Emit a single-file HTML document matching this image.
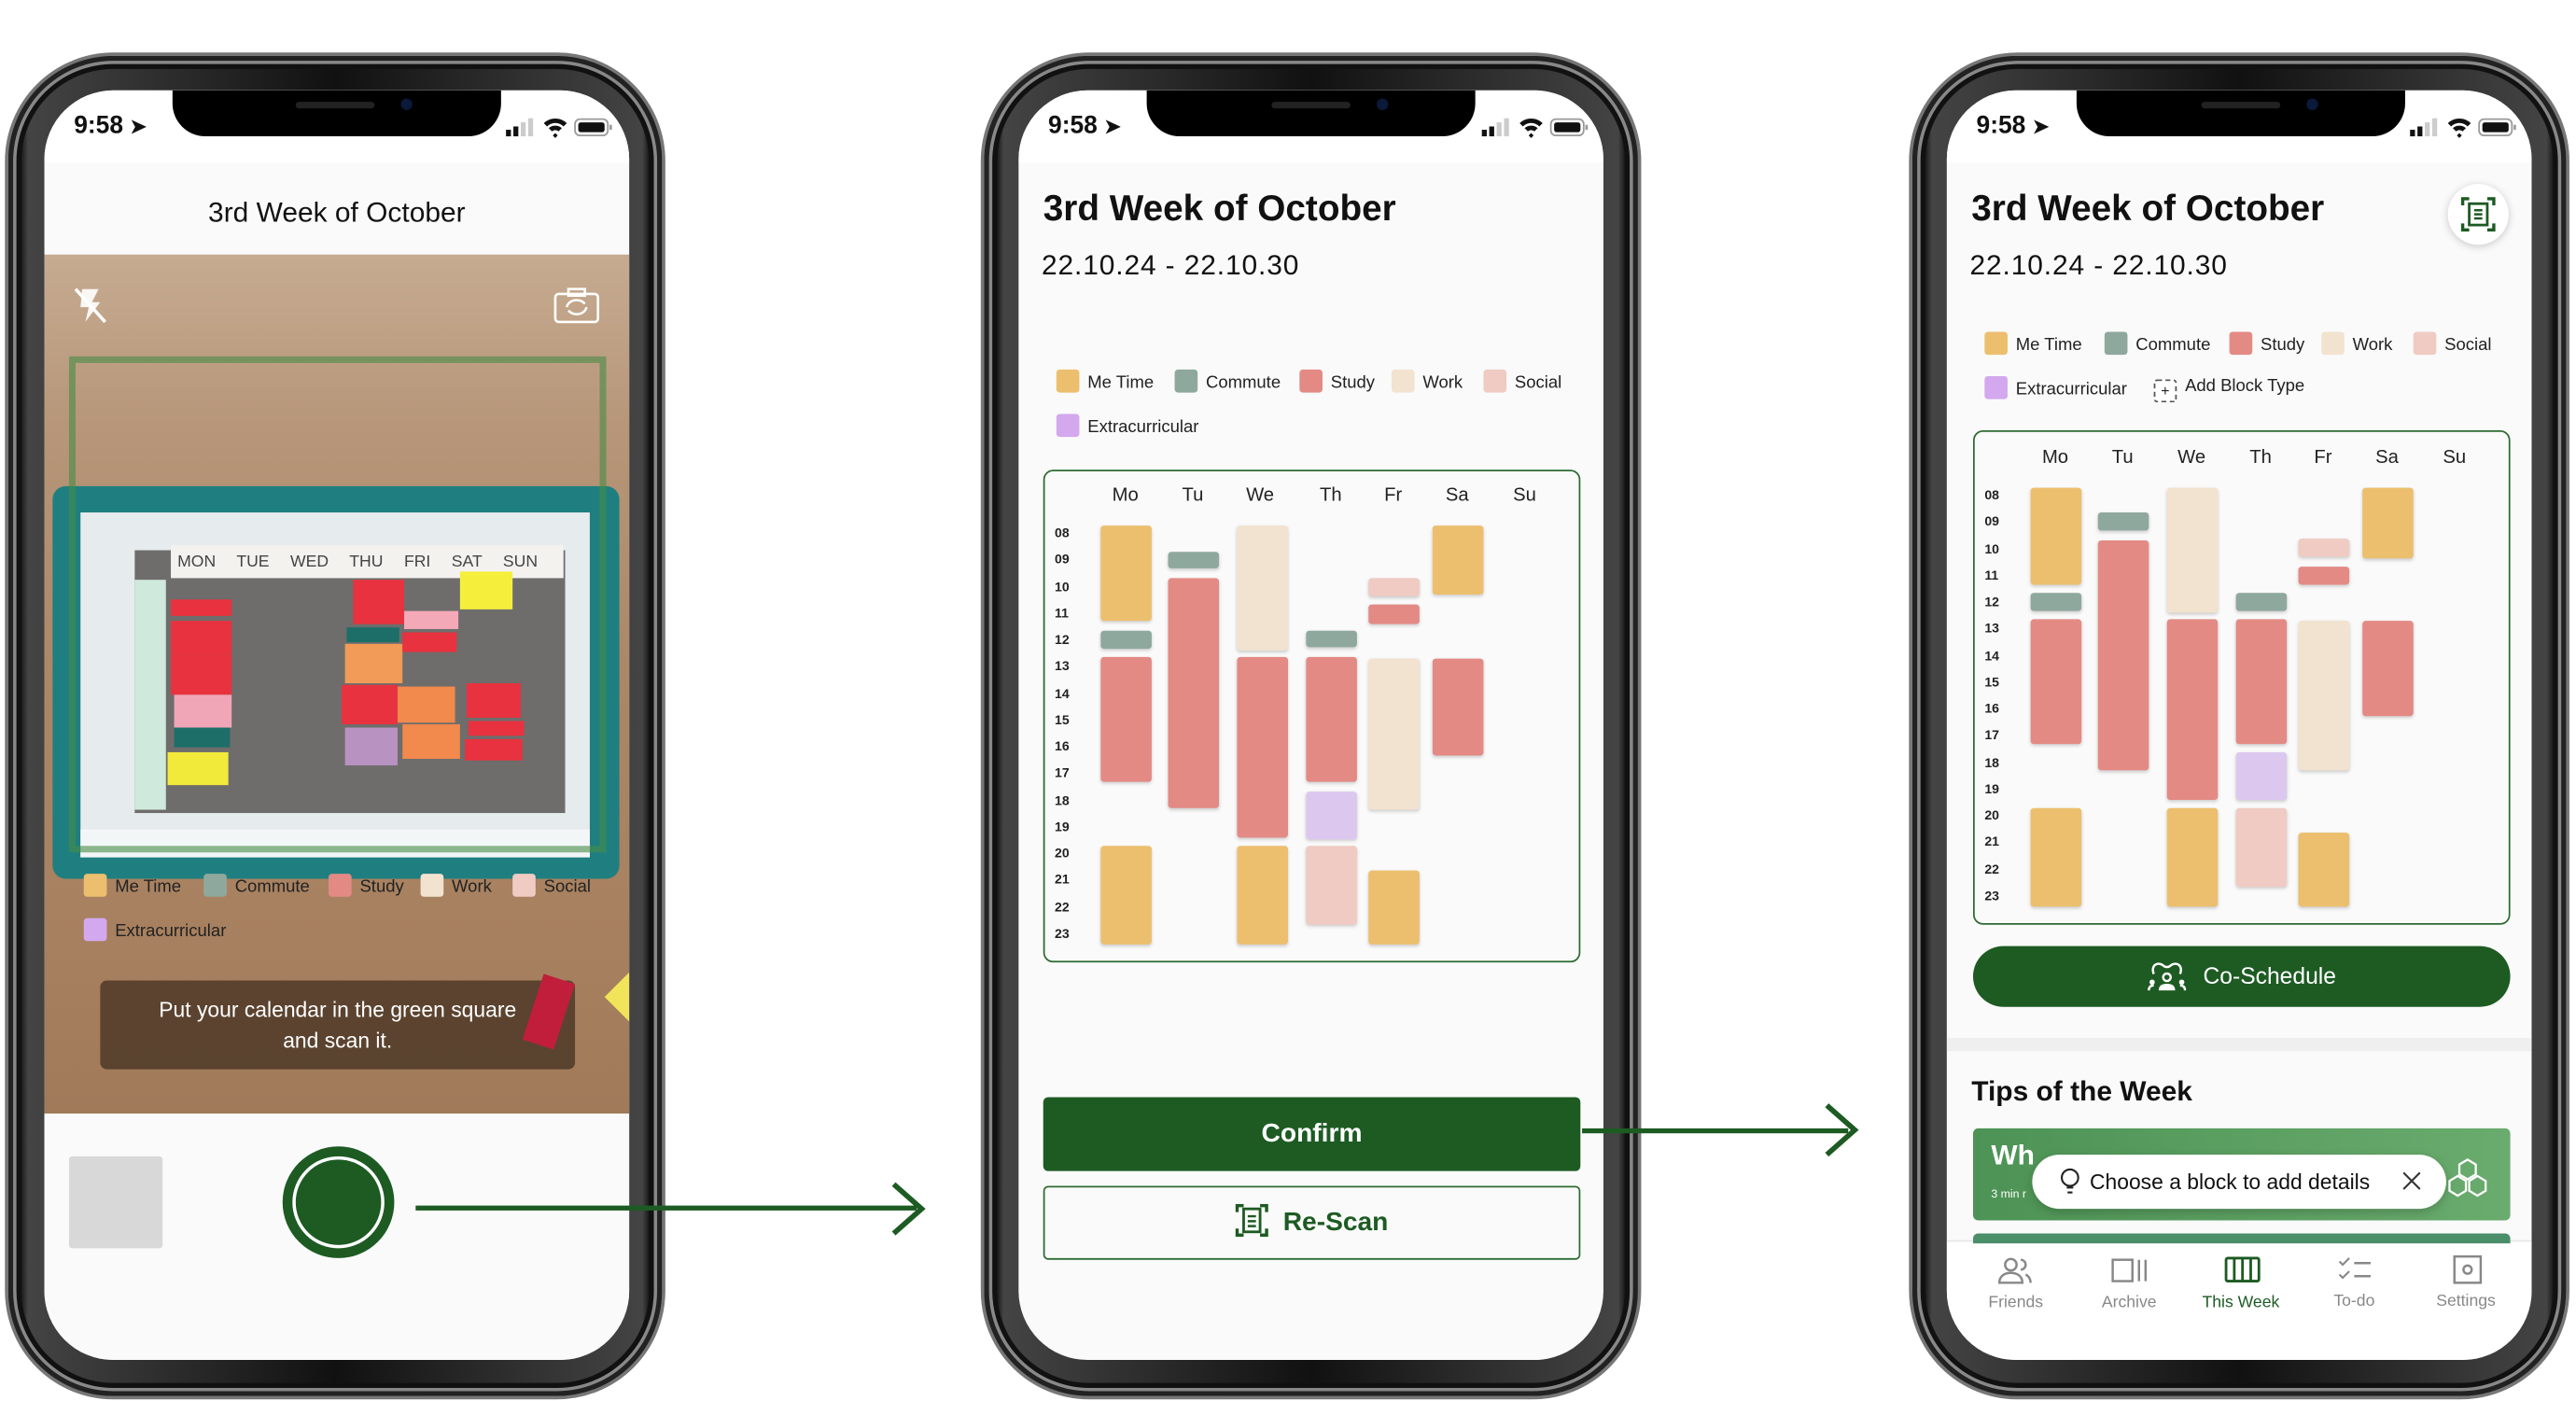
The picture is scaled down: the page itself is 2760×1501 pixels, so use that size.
<!DOCTYPE html>
<html><head><meta charset="utf-8">
<style>
*{margin:0;padding:0;box-sizing:border-box}
html,body{width:2760px;height:1501px;overflow:hidden;background:#fff;font-family:"Liberation Sans",sans-serif}
#root{position:absolute;left:0;top:0;width:1568px;height:853px;transform:scale(1.7602,1.7597);transform-origin:0 0}
.a{position:absolute}
.phone{position:absolute;width:402px;height:820px;border-radius:66px;background:linear-gradient(90deg,#2a2a2a,#9a9a9a 1%,#1a1a1a 2%,#444 3%,#111 50%,#444 97%,#1a1a1a 98%,#9a9a9a 99%,#2a2a2a);border:2px solid #777;box-shadow:inset 0 0 0 3px #222,inset 0 0 0 5px #888,inset 0 0 0 8px #111}
.screen{position:absolute;width:356px;height:773px;border-radius:42px;background:#fafafa;overflow:hidden}
.notch{position:absolute;top:0;width:200px;height:28px;background:#000;border-radius:0 0 20px 20px}
.sb{position:absolute;top:0;left:0;width:356px;height:44px;background:#fff}
.time{position:absolute;top:13px;left:18px;font-size:15px;font-weight:bold;color:#111}
.b{position:absolute;border-radius:2px;box-shadow:0 1px 2px rgba(0,0,0,.18)}
.mt{background:#ecbf6e}.cm{background:#8fa89e}.st{background:#e38a85}.wk{background:#f2e3d0}.so{background:#efcbc3}.ex{background:#dcc8ef}
.lg{position:absolute;font-size:10.5px;color:#222;white-space:nowrap}
.lg i{display:inline-block;width:14px;height:14px;border-radius:2px;vertical-align:-3px;margin-right:5px}
.hrs{position:absolute;font-size:8px;line-height:16.27px;color:#222;font-weight:bold}
.days{position:absolute;font-size:11.5px;color:#222}
.days span{position:absolute;transform:translateX(-50%)}
</style></head><body><div id="root">

<!-- PHONE 1 -->
<div class="phone" style="left:3px;top:32px"></div>
<div class="screen" style="left:27px;top:55px">
  <div class="sb"></div>
  <div class="time">9:58 <span style="font-size:12px">➤</span></div>
  <div class="notch" style="left:78px"></div>
  <div class="a" style="left:76px;width:204px;text-align:center;font-size:17px;color:#111;top:65px">3rd Week of October</div>
  <div class="a" style="left:0;top:100px;width:356px;height:523px;background:linear-gradient(180deg,#c6ab91 0%,#b79679 20%,#ab8767 50%,#a7805f 80%,#a07a59 100%)"></div>
  <div class="a" style="left:5px;top:241px;width:345px;height:239px;background:#1f7f80;border-radius:8px"></div>
  <div class="a" style="left:22px;top:257px;width:310px;height:210px;background:#e6ebee"></div>
  <div class="a" style="left:55px;top:280px;width:262px;height:160px;background:#6e6d6c"></div>
  <div class="a" style="left:55px;top:298px;width:19px;height:140px;background:#cfe9dc"></div>
  <div class="a" style="left:77px;top:277px;width:239px;height:20px;background:#f4f2ef;font-size:10px;color:#444;word-spacing:10px;padding:5px 0 0 4px;white-space:nowrap">MON TUE WED THU FRI SAT SUN</div>
  <div class="a" style="left:77px;top:310px;width:37px;height:10px;background:#e8323f"></div>
  <div class="a" style="left:77px;top:323px;width:37px;height:21px;background:#e8323f"></div>
  <div class="a" style="left:77px;top:344px;width:37px;height:24px;background:#e8323f"></div>
  <div class="a" style="left:79px;top:368px;width:35px;height:20px;background:#f1a6b8"></div>
  <div class="a" style="left:79px;top:388px;width:34px;height:12px;background:#1d6e68"></div>
  <div class="a" style="left:75px;top:403px;width:37px;height:20px;background:#f2ea3a"></div>
  <div class="a" style="left:188px;top:298px;width:31px;height:27px;background:#e8323f"></div>
  <div class="a" style="left:184px;top:327px;width:32px;height:9px;background:#1d6e68"></div>
  <div class="a" style="left:183px;top:337px;width:35px;height:24px;background:#f29a58"></div>
  <div class="a" style="left:181px;top:362px;width:34px;height:24px;background:#e8323f"></div>
  <div class="a" style="left:183px;top:388px;width:32px;height:23px;background:#b892c0"></div>
  <div class="a" style="left:219px;top:317px;width:33px;height:11px;background:#f3a9b8"></div>
  <div class="a" style="left:218px;top:330px;width:33px;height:12px;background:#e8323f"></div>
  <div class="a" style="left:215px;top:363px;width:35px;height:22px;background:#f2894d"></div>
  <div class="a" style="left:218px;top:386px;width:35px;height:21px;background:#f2894d"></div>
  <div class="a" style="left:253px;top:293px;width:32px;height:23px;background:#f5ef3c"></div>
  <div class="a" style="left:257px;top:361px;width:33px;height:21px;background:#e8323f"></div>
  <div class="a" style="left:258px;top:384px;width:34px;height:9px;background:#e8323f"></div>
  <div class="a" style="left:256px;top:395px;width:35px;height:13px;background:#e8323f"></div>
  <div class="a" style="left:22px;top:450px;width:310px;height:17px;background:#f3f6f7"></div>
  <div class="a" style="left:15px;top:162px;width:327px;height:302px;border:4px solid rgba(70,140,70,.6)"></div>
  <svg class="a" style="left:16px;top:118px" width="24" height="26"><path d="M7 3h10l-4 8h5L9 23l2-9H6z" fill="#fff" opacity=".9"/><path d="M3 3l18 20" stroke="#fff" stroke-width="2"/></svg>
  <svg class="a" style="left:309px;top:119px" width="30" height="24"><rect x="2" y="5" width="26" height="17" rx="2" fill="none" stroke="#fff" stroke-width="1.5"/><rect x="10" y="2" width="10" height="4" fill="none" stroke="#fff" stroke-width="1.5"/><path d="M9 13a6 5 0 0 1 11-2M21 13a6 5 0 0 1-11 2" fill="none" stroke="#fff" stroke-width="1.4"/></svg>
  <div class="lg" style="left:24px;top:477px"><i class="mt"></i>Me Time</div>
  <div class="lg" style="left:97px;top:477px"><i class="cm"></i>Commute</div>
  <div class="lg" style="left:173px;top:477px"><i class="st"></i>Study</div>
  <div class="lg" style="left:229px;top:477px"><i class="wk"></i>Work</div>
  <div class="lg" style="left:285px;top:477px"><i class="so"></i>Social</div>
  <div class="lg" style="left:24px;top:504px"><i style="background:#d3a8ee"></i>Extracurricular</div>
  <div class="a" style="left:34px;top:542px;width:289px;height:54px;background:rgba(72,52,36,.8);border-radius:4px;color:#fff;font-size:13px;line-height:19px;text-align:center;padding-top:8px">Put your calendar in the green square<br>and scan it.</div>
  <div class="a" style="left:297px;top:540px;width:20px;height:42px;background:#c01e3a;transform:rotate(18deg)"></div>
  <svg class="a" style="left:340px;top:537px" width="16" height="32"><path d="M16 0L1 15L16 30z" fill="#f1e35a"/></svg>
  <div class="a" style="left:0;top:623px;width:356px;height:150px;background:#fafafa"></div>
  <div class="a" style="left:15px;top:649px;width:57px;height:56px;background:#d8d8d8;border-radius:2px"></div>
  <div class="a" style="left:145px;top:643px;width:68px;height:68px;border-radius:50%;background:#1d5b23"></div>
  <div class="a" style="left:151px;top:649px;width:56px;height:56px;border-radius:50%;border:2.5px solid #fff"></div>
</div>

<!-- PHONE 2 -->
<div class="phone" style="left:597px;top:32px"></div>
<div class="screen" style="left:620px;top:55px">
  <div class="sb"></div>
  <div class="time">9:58 <span style="font-size:12px">➤</span></div>
  <div class="notch" style="left:78px"></div>
</div>
<div class="a" style="left:635px;top:114px;font-size:22px;font-weight:bold;color:#111">3rd Week of October</div>
<div class="a" style="left:634px;top:152px;font-size:17px;color:#111;letter-spacing:.5px">22.10.24 - 22.10.30</div>
<div class="lg" style="left:643px;top:225px"><i class="mt"></i>Me Time</div>
<div class="lg" style="left:715px;top:225px"><i class="cm"></i>Commute</div>
<div class="lg" style="left:791px;top:225px"><i class="st"></i>Study</div>
<div class="lg" style="left:847px;top:225px"><i class="wk"></i>Work</div>
<div class="lg" style="left:903px;top:225px"><i class="so"></i>Social</div>
<div class="lg" style="left:643px;top:252px"><i style="background:#d3a8ee"></i>Extracurricular</div>
<div class="a" style="left:635px;top:286px;width:327px;height:300px;border:1.3px solid #2e6b33;border-radius:6px"></div>
<div class="days" style="left:0;top:296px"><span style="left:685px">Mo</span><span style="left:726px">Tu</span><span style="left:767px">We</span><span style="left:810px">Th</span><span style="left:848px">Fr</span><span style="left:887px">Sa</span><span style="left:928px">Su</span></div>
<div class="hrs" style="left:642px;top:317px">08<br>09<br>10<br>11<br>12<br>13<br>14<br>15<br>16<br>17<br>18<br>19<br>20<br>21<br>22<br>23</div>
<div class="b mt" style="left:670px;top:320px;width:31px;height:58px"></div>
<div class="b cm" style="left:670px;top:384px;width:31px;height:11px"></div>
<div class="b st" style="left:670px;top:400px;width:31px;height:76px"></div>
<div class="b mt" style="left:670px;top:515px;width:31px;height:60px"></div>
<div class="b cm" style="left:711px;top:336px;width:31px;height:10px"></div>
<div class="b st" style="left:711px;top:352px;width:31px;height:140px"></div>
<div class="b wk" style="left:753px;top:320px;width:31px;height:76px"></div>
<div class="b st" style="left:753px;top:400px;width:31px;height:110px"></div>
<div class="b mt" style="left:753px;top:515px;width:31px;height:60px"></div>
<div class="b cm" style="left:795px;top:384px;width:31px;height:10px"></div>
<div class="b st" style="left:795px;top:400px;width:31px;height:76px"></div>
<div class="b ex" style="left:795px;top:482px;width:31px;height:29px"></div>
<div class="b so" style="left:795px;top:515px;width:31px;height:48px"></div>
<div class="b so" style="left:833px;top:352px;width:31px;height:11px"></div>
<div class="b st" style="left:833px;top:368px;width:31px;height:12px"></div>
<div class="b wk" style="left:833px;top:401px;width:31px;height:92px"></div>
<div class="b mt" style="left:833px;top:530px;width:31px;height:45px"></div>
<div class="b mt" style="left:872px;top:320px;width:31px;height:42px"></div>
<div class="b st" style="left:872px;top:401px;width:31px;height:59px"></div>
<div class="a" style="left:635px;top:668px;width:327px;height:45px;background:#1d5b23;border-radius:3px;color:#fff;font-weight:bold;font-size:16px;text-align:center;line-height:45px">Confirm</div>
<div class="a" style="left:635px;top:722px;width:327px;height:45px;border:1.3px solid #2e6b33;border-radius:3px;color:#1d5b23;font-weight:bold;font-size:16px;text-align:center;line-height:43px"><svg width="20" height="20" style="vertical-align:-4px;margin-right:9px"><path d="M1 5V1h4M15 1h4v4M19 15v4h-4M5 19H1v-4" fill="none" stroke="#1d5b23" stroke-width="2"/><rect x="5" y="3" width="10" height="14" fill="none" stroke="#1d5b23" stroke-width="1.6"/><path d="M7.5 7.5h5M7.5 10.5h5M7.5 13.5h5" stroke="#1d5b23" stroke-width="1.4"/></svg>Re-Scan</div>

<!-- PHONE 3 -->
<div class="phone" style="left:1162px;top:32px"></div>
<div class="screen" style="left:1185px;top:55px">
  <div class="sb"></div>
  <div class="time">9:58 <span style="font-size:12px">➤</span></div>
  <div class="notch" style="left:79px"></div>
  <div class="a" style="left:0;top:577px;width:356px;height:8px;background:#efefef"></div>
  <div class="a" style="left:0;top:700px;width:356px;height:73px;background:#fff;border-top:1px solid #e6e6e6"></div>
</div>
<div class="a" style="left:1200px;top:114px;font-size:22px;font-weight:bold;color:#111">3rd Week of October</div>
<div class="a" style="left:1199px;top:152px;font-size:17px;color:#111;letter-spacing:.5px">22.10.24 - 22.10.30</div>
<div class="a" style="left:1490px;top:112px;width:37px;height:37px;border-radius:50%;background:#fff;box-shadow:0 1px 5px rgba(0,0,0,.2)"></div>
<svg class="a" style="left:1498px;top:120px" width="21" height="21"><path d="M1 5V1h4M16 1h4v4M20 16v4h-4M5 20H1v-4" fill="none" stroke="#1d5b23" stroke-width="2"/><rect x="5" y="4" width="11" height="13" fill="none" stroke="#1d5b23" stroke-width="1.6"/><path d="M8 8h5M8 10.5h5M8 13h5" stroke="#1d5b23" stroke-width="1.4"/></svg>
<div class="lg" style="left:1208px;top:202px"><i class="mt"></i>Me Time</div>
<div class="lg" style="left:1281px;top:202px"><i class="cm"></i>Commute</div>
<div class="lg" style="left:1357px;top:202px"><i class="st"></i>Study</div>
<div class="lg" style="left:1413px;top:202px"><i class="wk"></i>Work</div>
<div class="lg" style="left:1469px;top:202px"><i class="so"></i>Social</div>
<div class="lg" style="left:1208px;top:229px"><i style="background:#d3a8ee"></i>Extracurricular</div>
<div class="lg" style="left:1311px;top:229px"><i style="border:1px dashed #555;background:#fff;text-align:center;font-style:normal;font-size:9px;line-height:12px">+</i>Add Block Type</div>
<div class="a" style="left:1201px;top:262px;width:327px;height:301px;border:1.3px solid #2e6b33;border-radius:6px"></div>
<div class="days" style="left:0;top:273px"><span style="left:1251px">Mo</span><span style="left:1292px">Tu</span><span style="left:1334px">We</span><span style="left:1376px">Th</span><span style="left:1414px">Fr</span><span style="left:1453px">Sa</span><span style="left:1494px">Su</span></div>
<div class="hrs" style="left:1208px;top:294px">08<br>09<br>10<br>11<br>12<br>13<br>14<br>15<br>16<br>17<br>18<br>19<br>20<br>21<br>22<br>23</div>
<div class="b mt" style="left:1236px;top:297px;width:31px;height:59px"></div>
<div class="b cm" style="left:1236px;top:361px;width:31px;height:11px"></div>
<div class="b st" style="left:1236px;top:377px;width:31px;height:76px"></div>
<div class="b mt" style="left:1236px;top:492px;width:31px;height:60px"></div>
<div class="b cm" style="left:1277px;top:312px;width:31px;height:11px"></div>
<div class="b st" style="left:1277px;top:329px;width:31px;height:140px"></div>
<div class="b wk" style="left:1319px;top:297px;width:31px;height:76px"></div>
<div class="b st" style="left:1319px;top:377px;width:31px;height:110px"></div>
<div class="b mt" style="left:1319px;top:492px;width:31px;height:60px"></div>
<div class="b cm" style="left:1361px;top:361px;width:31px;height:11px"></div>
<div class="b st" style="left:1361px;top:377px;width:31px;height:76px"></div>
<div class="b ex" style="left:1361px;top:458px;width:31px;height:29px"></div>
<div class="b so" style="left:1361px;top:492px;width:31px;height:48px"></div>
<div class="b so" style="left:1399px;top:328px;width:31px;height:11px"></div>
<div class="b st" style="left:1399px;top:345px;width:31px;height:11px"></div>
<div class="b wk" style="left:1399px;top:378px;width:31px;height:91px"></div>
<div class="b mt" style="left:1399px;top:507px;width:31px;height:45px"></div>
<div class="b mt" style="left:1438px;top:297px;width:31px;height:43px"></div>
<div class="b st" style="left:1438px;top:378px;width:31px;height:58px"></div>
<div class="a" style="left:1201px;top:576px;width:327px;height:37px;background:#1d5b23;border-radius:19px;color:#fff;font-size:14px;text-align:center;line-height:37px"><svg width="24" height="20" style="vertical-align:-5px;margin-right:10px"><path d="M4 9C2 4 6 1 10 4c1 1 3 1 4 0 4-3 8 0 6 5" fill="none" stroke="#fff" stroke-width="1.4"/><circle cx="12" cy="11" r="2.3" fill="none" stroke="#fff" stroke-width="1.4"/><path d="M7 19c0-3 2-4 5-4s5 1 5 4z" fill="#fff"/><circle cx="3" cy="14" r="1.6" fill="#fff"/><circle cx="21" cy="14" r="1.6" fill="#fff"/><path d="M1 19c0-2 1-3 3-3M23 19c0-2-1-3-3-3" stroke="#fff" stroke-width="1.4" fill="none"/></svg>Co-Schedule</div>
<div class="a" style="left:1200px;top:655px;font-size:17px;font-weight:bold;color:#111">Tips of the Week</div>
<div class="a" style="left:1201px;top:687px;width:327px;height:56px;background:linear-gradient(90deg,#4d9355,#6aab6e);border-radius:3px"></div>
<div class="a" style="left:1212px;top:694px;font-size:17px;font-weight:bold;color:#fff">Wh</div>
<div class="a" style="left:1212px;top:724px;font-size:7px;color:#fff">3 min r</div>
<div class="a" style="left:1201px;top:751px;width:327px;height:6px;background:#4a8e6a;border-radius:3px 3px 0 0"></div>
<div class="a" style="left:1237px;top:703px;width:252px;height:33px;background:#fff;border-radius:17px;box-shadow:0 2px 6px rgba(0,0,0,.2);font-size:13px;color:#111;line-height:33px;padding-left:35px;white-space:nowrap">Choose a block to add details</div>
<svg class="a" style="left:1253px;top:711px" width="14" height="18"><circle cx="7" cy="6" r="5" fill="none" stroke="#222" stroke-width="1.2"/><path d="M5 12h4M5.5 15h3" stroke="#222" stroke-width="1.2"/></svg>
<svg class="a" style="left:1462px;top:713px" width="12" height="12"><path d="M1 1l10 10M11 1L1 11" stroke="#333" stroke-width="1.2"/></svg>
<svg class="a" style="left:1489px;top:704px" width="26" height="26"><g fill="none" stroke="#fff" stroke-width="1.3"><path d="M13 2l5 3v6l-5 3-5-3V5z"/><path d="M7 12l5 3v6l-5 3-5-3v-6z"/><path d="M19 12l5 3v6l-5 3-5-3v-6z"/></g></svg>
<svg class="a" style="left:1216px;top:765px" width="22" height="18"><circle cx="8" cy="5" r="3.5" fill="none" stroke="#888" stroke-width="1.4"/><path d="M1 16c0-4 3-6 7-6s7 2 7 6z" fill="none" stroke="#888" stroke-width="1.4"/><path d="M14 2a3 3 0 0 1 0 6M17 11c2 1 3 3 3 5" fill="none" stroke="#888" stroke-width="1.4"/></svg>
<svg class="a" style="left:1285px;top:766px" width="24" height="15"><rect x="1" y="1" width="12" height="13" fill="none" stroke="#888" stroke-width="1.4"/><path d="M17 1v13M21 1v13" stroke="#888" stroke-width="1.4"/></svg>
<svg class="a" style="left:1354px;top:765px" width="22" height="16"><rect x="1" y="1" width="20" height="14" rx="1" fill="none" stroke="#1d5b23" stroke-width="1.6"/><path d="M6 1v14M11 1v14M16 1v14" stroke="#1d5b23" stroke-width="1.6"/></svg>
<svg class="a" style="left:1423px;top:765px" width="22" height="15"><path d="M1 3l2 2 4-4M1 11l2 2 4-4" fill="none" stroke="#888" stroke-width="1.2"/><path d="M10 4h10M10 12h10" stroke="#888" stroke-width="1.4"/></svg>
<svg class="a" style="left:1493px;top:764px" width="18" height="18"><rect x="1" y="1" width="16" height="16" fill="none" stroke="#888" stroke-width="1.4"/><circle cx="9" cy="9" r="2.5" fill="none" stroke="#888" stroke-width="1.4"/></svg>
<div class="a" style="left:1197px;top:788px;width:60px;text-align:center;font-size:10px;color:#888">Friends</div>
<div class="a" style="left:1266px;top:788px;width:60px;text-align:center;font-size:10px;color:#888">Archive</div>
<div class="a" style="left:1334px;top:788px;width:60px;text-align:center;font-size:10px;color:#1d5b23">This Week</div>
<div class="a" style="left:1403px;top:787px;width:60px;text-align:center;font-size:10px;color:#888">To-do</div>
<div class="a" style="left:1471px;top:787px;width:60px;text-align:center;font-size:10px;color:#888">Settings</div>

<svg class="a" style="left:307px;top:71px" width="66" height="13"><rect x="1" y="8" width="3" height="4" fill="#111"/><rect x="5.5" y="6" width="3" height="6" fill="#111"/><rect x="10" y="3.5" width="3" height="8.5" fill="#ccc"/><rect x="14.5" y="1" width="3" height="11" fill="#ccc"/><path d="M24 4a10 10 0 0 1 14 0l-2 2a7 7 0 0 0-10 0zM27 7a6 6 0 0 1 8 0l-2 2a3 3 0 0 0-4 0zM31 10l1.5 1.5L31 13l-1.5-1.5z" fill="#111"/><rect x="43" y="1.5" width="20" height="10" rx="3" fill="none" stroke="#999" stroke-width="1"/><rect x="45" y="3.5" width="16" height="6" rx="1.5" fill="#111"/><rect x="64" y="5" width="1.5" height="3" fill="#999"/></svg>
<svg class="a" style="left:901px;top:71px" width="66" height="13"><rect x="1" y="8" width="3" height="4" fill="#111"/><rect x="5.5" y="6" width="3" height="6" fill="#111"/><rect x="10" y="3.5" width="3" height="8.5" fill="#ccc"/><rect x="14.5" y="1" width="3" height="11" fill="#ccc"/><path d="M24 4a10 10 0 0 1 14 0l-2 2a7 7 0 0 0-10 0zM27 7a6 6 0 0 1 8 0l-2 2a3 3 0 0 0-4 0zM31 10l1.5 1.5L31 13l-1.5-1.5z" fill="#111"/><rect x="43" y="1.5" width="20" height="10" rx="3" fill="none" stroke="#999" stroke-width="1"/><rect x="45" y="3.5" width="16" height="6" rx="1.5" fill="#111"/><rect x="64" y="5" width="1.5" height="3" fill="#999"/></svg>
<svg class="a" style="left:1466px;top:71px" width="66" height="13"><rect x="1" y="8" width="3" height="4" fill="#111"/><rect x="5.5" y="6" width="3" height="6" fill="#111"/><rect x="10" y="3.5" width="3" height="8.5" fill="#ccc"/><rect x="14.5" y="1" width="3" height="11" fill="#ccc"/><path d="M24 4a10 10 0 0 1 14 0l-2 2a7 7 0 0 0-10 0zM27 7a6 6 0 0 1 8 0l-2 2a3 3 0 0 0-4 0zM31 10l1.5 1.5L31 13l-1.5-1.5z" fill="#111"/><rect x="43" y="1.5" width="20" height="10" rx="3" fill="none" stroke="#999" stroke-width="1"/><rect x="45" y="3.5" width="16" height="6" rx="1.5" fill="#111"/><rect x="64" y="5" width="1.5" height="3" fill="#999"/></svg>
<div class="a" style="left:180px;top:62px;width:48px;height:4px;border-radius:2px;background:#222"></div><div class="a" style="left:244px;top:60px;width:7px;height:7px;border-radius:50%;background:#0b1a3a"></div>
<div class="a" style="left:774px;top:62px;width:48px;height:4px;border-radius:2px;background:#222"></div><div class="a" style="left:838px;top:60px;width:7px;height:7px;border-radius:50%;background:#0b1a3a"></div>
<div class="a" style="left:1340px;top:62px;width:48px;height:4px;border-radius:2px;background:#222"></div><div class="a" style="left:1404px;top:60px;width:7px;height:7px;border-radius:50%;background:#0b1a3a"></div>

<!-- ARROWS (on top) -->
<div class="a" style="left:253px;top:734px;width:305px;height:3px;background:#1d5b23"></div>
<svg class="a" style="left:540px;top:718px" width="26" height="36"><path d="M4 3 L21 18 L4 33" fill="none" stroke="#1d5b23" stroke-width="3.2"/></svg>
<div class="a" style="left:963px;top:687px;width:162px;height:3px;background:#1d5b23"></div>
<svg class="a" style="left:1108px;top:670px" width="26" height="36"><path d="M4 3 L21 18 L4 33" fill="none" stroke="#1d5b23" stroke-width="3.2"/></svg>
</div></body></html>
